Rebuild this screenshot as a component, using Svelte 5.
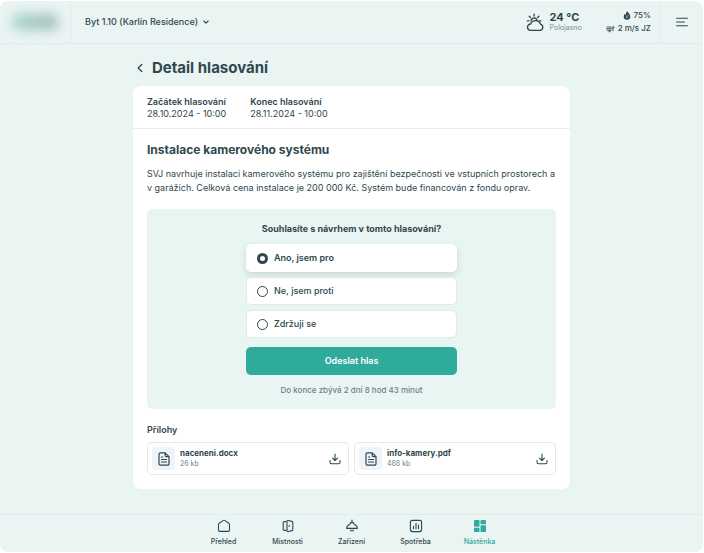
<script lang="ts">
  type Option = { id: string; label: string };
  type Attachment = { name: string; size: string };

  export let options: Option[] = [
    { id: 'yes', label: 'Ano, jsem pro' },
    { id: 'no', label: 'Ne, jsem proti' },
    { id: 'abstain', label: 'Zdržuji se' }
  ];

  export let attachments: Attachment[] = [
    { name: 'naceneni.docx', size: '26 kb' },
    { name: 'info-kamery.pdf', size: '488 kb' }
  ];

  const navItems = [
    { id: 'overview', label: 'Přehled' },
    { id: 'rooms', label: 'Místnosti' },
    { id: 'devices', label: 'Zařízení' },
    { id: 'usage', label: 'Spotřeba' },
    { id: 'board', label: 'Nástěnka' }
  ];

  let activeNav = 'board';
  let vote = 'yes';
  let submitted = false;

  function submitVote() {
    submitted = true;
  }
</script>

<div class="app">
  <header class="topbar">
    <a class="logo" href="#home" aria-label="Domů"><span class="logo-mark"></span></a>

    <button class="unit-button" type="button">
      Byt 1.10 (Karlín Residence)
      <svg width="8" height="8" viewBox="0 0 8 8" fill="none" stroke="currentColor" stroke-width="1.1" stroke-linecap="round" stroke-linejoin="round">
        <path d="M1.8 3 4 5.2 6.2 3" />
      </svg>
    </button>

    <div class="weather">
      <svg width="19" height="19" viewBox="0 0 20 20" fill="none" stroke="currentColor" stroke-width="1.4" stroke-linecap="round" stroke-linejoin="round">
        <path d="M8.5 1.2v2M3.4 3.4l1.3 1.3M13.6 3.4l-1.3 1.3M1.4 8.2h1.8M13.9 8.2h1.8M5.3 8.2a3.3 3.3 0 0 1 6.3-.9" />
        <path d="M5 18.2a3.3 3.3 0 0 1-.2-6.6 5.6 5.6 0 0 1 10.4 0A3.4 3.4 0 0 1 15 18.2Z" />
      </svg>
      <div>
        <div class="temperature">24 °C</div>
        <div class="condition">Polojasno</div>
      </div>
    </div>

    <div class="conditions">
      <div class="condition-row">
        <svg width="8" height="9" viewBox="0 0 8 9">
          <path fill="currentColor" d="M4 .3C4.9 1.5 7.3 3.4 7.3 5.5a3.3 3.3 0 0 1-6.6 0c0-1 .5-1.8 1-2.4l.8.8C2.7 2.5 3.3 1.3 4 .3Z" />
          <path fill="none" stroke="#eaf4f3" stroke-width=".7" d="m2.9 7 2.2-2.8M2.9 4.8h.5M4.8 6.6h.5" />
        </svg>
        75%
      </div>
      <div class="condition-row">
        <svg width="9" height="8" viewBox="0 0 10 8" fill="none" stroke="currentColor" stroke-width="1" stroke-linecap="round">
          <path d="M1.4 1.8h3.8M.6 3.7h7.2a1.2 1.2 0 1 0-1.2-1.4M1.4 5.4h4M4 5.4a.9.9 0 1 1-.9 1.2M7 5.4h1.4" />
        </svg>
        2 m/s JZ
      </div>
    </div>

    <button class="menu-button" type="button" aria-label="Menu">
      <svg width="12" height="10" viewBox="0 0 12 10" fill="none" stroke="currentColor" stroke-width="1.1" stroke-linecap="round">
        <path d="M.6 1.2h10.8M.6 5h7.8M.6 8.8h10.8" />
      </svg>
    </button>
  </header>

  <main class="content">
    <div class="page-title">
      <a class="back" href="#back" aria-label="Zpět">
        <svg width="8" height="10" viewBox="0 0 8 10" fill="none" stroke="currentColor" stroke-width="1.3" stroke-linecap="round" stroke-linejoin="round">
          <path d="M5.8 1.5 2.2 5l3.6 3.5" />
        </svg>
      </a>
      <h1>Detail hlasování</h1>
    </div>

    <div class="card">
      <dl class="dates">
        <div>
          <dt>Začátek hlasování</dt>
          <dd>28.10.2024 - 10:00</dd>
        </div>
        <div>
          <dt>Konec hlasování</dt>
          <dd>28.11.2024 - 10:00</dd>
        </div>
      </dl>

      <div class="card-body">
        <h2>Instalace kamerového systému</h2>
        <p class="description">
          SVJ navrhuje instalaci kamerového systému pro zajištění bezpečnosti ve vstupních prostorech a
          v&nbsp;garážích. Celková cena instalace je 200 000 Kč. Systém bude financován z fondu oprav.
        </p>

        <form class="vote" on:submit|preventDefault={submitVote}>
          <fieldset>
            <legend>Souhlasíte s návrhem v tomto hlasování?</legend>
            {#each options as option (option.id)}
              <label class="option" class:selected={vote === option.id}>
                <input type="radio" name="vote" value={option.id} bind:group={vote} />
                {option.label}
              </label>
            {/each}
          </fieldset>
          <button class="submit-button" type="submit" disabled={submitted}>Odeslat hlas</button>
          <p class="remaining">Do konce zbývá 2 dní 8 hod 43 minut</p>
        </form>

        <h3>Přílohy</h3>
        <div class="attachments">
          {#each attachments as file (file.name)}
            <div class="attachment">
              <span class="file-icon">
                <svg width="12" height="14" viewBox="0 0 12 14" fill="none" stroke="currentColor" stroke-width="1.2" stroke-linecap="round" stroke-linejoin="round">
                  <path d="M7.2.8H2.4A1.4 1.4 0 0 0 1 2.2v9.6a1.4 1.4 0 0 0 1.4 1.4h7.2a1.4 1.4 0 0 0 1.4-1.4V4.6ZM7.2.8v2.6a1.2 1.2 0 0 0 1.2 1.2H11M3.5 5h1.3M3.5 7.5h5M3.5 10h5" />
                </svg>
              </span>
              <div class="file-info">
                <div class="file-name">{file.name}</div>
                <div class="file-size">{file.size}</div>
              </div>
              <button class="download" type="button" aria-label="Stáhnout {file.name}">
                <svg width="12" height="12" viewBox="0 0 12 12" fill="none" stroke="currentColor" stroke-width="1.1" stroke-linecap="round" stroke-linejoin="round">
                  <path d="M6 1v6.3M3.6 5.1 6 7.5l2.4-2.4M1 7.6v1.6a1.6 1.6 0 0 0 1.6 1.6h6.8A1.6 1.6 0 0 0 11 9.2V7.6" />
                </svg>
              </button>
            </div>
          {/each}
        </div>
      </div>
    </div>
  </main>

  <nav class="bottom-nav">
    {#each navItems as item (item.id)}
      <a href="#{item.id}" class:active={activeNav === item.id} on:click={() => (activeNav = item.id)}>
        <svg width="14" height="14" viewBox="0 0 14 14" fill="none" stroke="currentColor" stroke-width="1.1" stroke-linecap="round" stroke-linejoin="round">
          {#if item.id === 'overview'}
            <path d="M1.5 5.6a1.6 1.6 0 0 1 .7-1.3L6 1.6a1.7 1.7 0 0 1 2 0l3.8 2.7a1.6 1.6 0 0 1 .7 1.3v5.5a1.3 1.3 0 0 1-1.3 1.3H2.8a1.3 1.3 0 0 1-1.3-1.3Z" />
          {:else if item.id === 'rooms'}
            <path d="M4.8 2.6H3.3a1.1 1.1 0 0 0-1.1 1.1v6.6a1.1 1.1 0 0 0 1.1 1.1h1.5M6 2.4v9.2a.9.9 0 0 0 1.1.9l3.9-.9a1 1 0 0 0 .8-1V3.4a1 1 0 0 0-.8-1l-3.9-.9a.9.9 0 0 0-1.1.9ZM8.2 6.5v1" />
          {:else if item.id === 'devices'}
            <path d="M7 1v3M5 5.2a2 2 0 0 1 4 0C11 5.8 12.2 7.4 12.3 9.4H1.7C1.8 7.4 3 5.8 5 5.2ZM5.6 11a1.5 1.5 0 0 0 2.8 0" />
          {:else if item.id === 'usage'}
            <rect x="1.4" y="1.4" width="11.2" height="11.2" rx="2" />
            <path d="M4.5 7.2v2.6M7 4.3v5.5M9.5 6v3.8" />
          {:else}
            <g fill="currentColor" stroke="none">
              <rect x="1" y="1" width="5.5" height="6.8" rx=".8" />
              <rect x="7.5" y="1" width="5.5" height="4.3" rx=".8" />
              <rect x="1" y="8.8" width="5.5" height="4.3" rx=".8" />
              <rect x="7.5" y="6.3" width="5.5" height="6.8" rx=".8" />
            </g>
          {/if}
        </svg>
        {item.label}
      </a>
    {/each}
  </nav>
</div>

<style>
  :global(body) {
    background: #fff;
  }

  .app {
    box-sizing: border-box;
    min-height: calc(100vh - 2px);
    margin: 1px 1px 1px 0;
    display: flex;
    flex-direction: column;
    background: #eaf4f3;
    border-radius: 8px;
    color: #2f474e;
    font-family: Inter, "Liberation Sans", sans-serif;
    font-size: 9px;
    line-height: 14px;
    overflow: hidden;
  }

  button {
    font: inherit;
    color: inherit;
    background: none;
    border: none;
    padding: 0;
    cursor: pointer;
  }

  a {
    color: inherit;
    text-decoration: none;
  }

  svg {
    display: block;
    flex: none;
  }

  h1, h2, h3, p, dl, dd {
    margin: 0;
  }

  .topbar {
    display: flex;
    align-items: stretch;
    height: 42px;
    border-bottom: 1px solid #e1ebeb;
  }

  .logo {
    box-sizing: border-box;
    width: 71px;
    padding: 13px 12px;
    border-right: 1px solid #e1ebeb;
  }

  .logo-mark {
    display: block;
    height: 16px;
    background: linear-gradient(90deg, #a5d8cd, #a6c4bf 60%, #a3bbba);
    border-radius: 6px;
    filter: blur(6px);
  }

  .unit-button {
    display: flex;
    align-items: center;
    gap: 4px;
    margin-right: auto;
    padding: 0 14px;
    font-weight: 500;
  }

  .weather {
    display: flex;
    align-items: center;
    gap: 5px;
  }

  .temperature {
    font-size: 11px;
    line-height: 12px;
    font-weight: 700;
  }

  .condition {
    font-size: 7px;
    line-height: 10px;
    color: #7b8d96;
  }

  .conditions {
    display: flex;
    flex-direction: column;
    justify-content: center;
    margin-left: 24px;
    padding-right: 8px;
    border-right: 1px solid #e1ebeb;
    font-size: 8px;
    line-height: 13px;
    font-weight: 500;
  }

  .condition-row {
    display: flex;
    align-items: center;
    justify-content: flex-end;
    gap: 3px;
  }

  .menu-button {
    display: flex;
    align-items: center;
    justify-content: center;
    width: 43px;
  }

  .content {
    flex: 1;
    box-sizing: border-box;
    width: 100%;
    max-width: 437px;
    margin: 0 auto;
    padding: 14px 0 24px;
  }

  .page-title {
    display: flex;
    align-items: center;
    gap: 8px;
    padding-left: 3px;
    margin-bottom: 8px;
  }

  h1 {
    font-size: 15px;
    line-height: 20px;
    font-weight: 700;
  }

  .card {
    background: #fff;
    border-radius: 8px;
  }

  .dates {
    display: flex;
    gap: 24px;
    padding: 10px 14px 8px;
    border-bottom: 1px solid #e6eeee;
    line-height: 12px;
  }

  dt {
    font-weight: 600;
  }

  .card-body {
    padding: 13px 14px 14px;
  }

  h2 {
    font-size: 12px;
    line-height: 16px;
    font-weight: 700;
    margin-bottom: 9px;
  }

  .vote {
    display: flex;
    flex-direction: column;
    align-items: center;
    margin: 14px 0;
    padding: 13px 14px 12px;
    background: #e9f5f3;
    border-radius: 5px;
  }

  fieldset {
    display: flex;
    flex-direction: column;
    gap: 5px;
    width: 100%;
    max-width: 211px;
    min-width: 0;
    margin: 0 0 9px;
    padding: 0;
    border: none;
  }

  legend {
    padding: 0;
    margin: 0 auto 8px;
    font-weight: 700;
    white-space: nowrap;
  }

  .option {
    box-sizing: border-box;
    height: 28px;
    display: flex;
    align-items: center;
    gap: 6px;
    padding: 0 10px;
    background: #fff;
    border: 1px solid #dfe9ea;
    border-radius: 5px;
    font-weight: 500;
    cursor: pointer;
  }

  .option.selected {
    border-color: #fff;
    font-weight: 600;
    box-shadow: 0 3px 6px rgba(44, 68, 75, 0.16);
  }

  input[type='radio'] {
    appearance: none;
    box-sizing: border-box;
    width: 11px;
    height: 11px;
    margin: 0;
    border: 1px solid #2f474e;
    border-radius: 50%;
    background: #fff;
  }

  input[type='radio']:checked {
    border-width: 3px;
  }

  .submit-button {
    width: 100%;
    max-width: 211px;
    height: 28px;
    background: #2fab9b;
    border-radius: 5px;
    color: #fff;
    font-weight: 600;
  }

  .remaining {
    margin-top: 8px;
    font-size: 8px;
    color: #6b7f8b;
    font-weight: 500;
  }

  h3 {
    font-size: 9px;
    line-height: 14px;
    font-weight: 600;
    margin-bottom: 5px;
  }

  .attachments {
    display: grid;
    grid-template-columns: 1fr 1fr;
    gap: 5px;
  }

  .attachment {
    display: flex;
    align-items: center;
    gap: 5px;
    padding: 4px 7px 4px 4px;
    border: 1px solid #e3e8ea;
    border-radius: 5px;
  }

  .file-icon {
    display: flex;
    align-items: center;
    justify-content: center;
    width: 23px;
    height: 23px;
    background: #eef4f8;
    border-radius: 4px;
  }

  .file-info {
    flex: 1;
    min-width: 0;
  }

  .file-name {
    font-size: 8px;
    line-height: 11px;
    font-weight: 700;
  }

  .file-size {
    font-size: 7px;
    line-height: 10px;
    color: #6b7f8b;
  }

  .bottom-nav {
    display: flex;
    justify-content: center;
    padding: 4px 0 5px;
    border-top: 1px solid #e1ebeb;
  }

  .bottom-nav a {
    display: flex;
    flex-direction: column;
    align-items: center;
    gap: 3px;
    width: 64px;
    font-size: 7px;
    line-height: 11px;
    font-weight: 500;
  }

  .bottom-nav a.active {
    color: #2fab9b;
  }
</style>
